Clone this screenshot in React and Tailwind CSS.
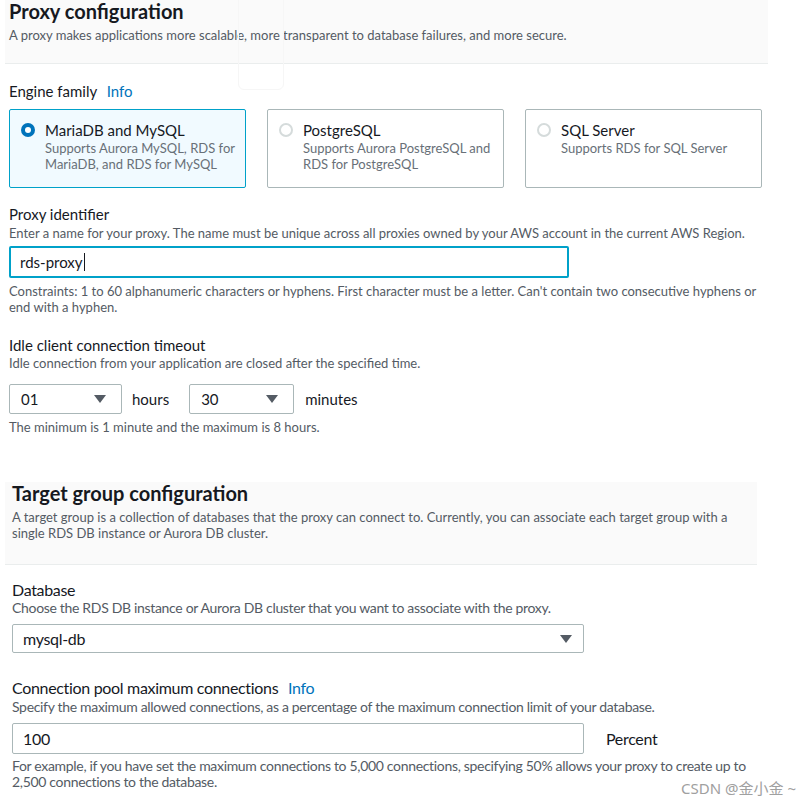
import { useState } from "react";

function Radio({ checked }) {
  return checked ? (
    <span className="mt-[3px] flex h-[14px] w-[14px] shrink-0 items-center justify-center rounded-full bg-[#0073bb]">
      <span className="h-[6px] w-[6px] rounded-full bg-white" />
    </span>
  ) : (
    <span className="mt-[3px] h-[14px] w-[14px] shrink-0 rounded-full border-2 border-[#d5dbdb] bg-white" />
  );
}

function EngineCard({ title, desc, checked }) {
  return (
    <div
      className={`flex h-[79px] w-[237px] gap-[10px] rounded-[2px] border pl-[11px] pt-[10px] pr-2 ${
        checked ? "border-[#00a1c9] bg-[#f1faff]" : "border-[#aab7b8] bg-white"
      }`}
    >
      <Radio checked={checked} />
      <div>
        <p className="text-[15px] leading-[20px] text-[#16191f]">{title}</p>
        <p className="text-[13px] leading-[16px] text-[#687078]">{desc}</p>
      </div>
    </div>
  );
}

function Caret() {
  return (
    <svg width="12" height="8" viewBox="0 0 12 8" className="shrink-0">
      <path d="M0 0 H12 L6 8 Z" fill="#545b64" />
    </svg>
  );
}

function TimeSelect({ value, width }) {
  return (
    <div
      className={`flex h-[30px] items-center justify-between rounded-[2px] border border-[#aab7b8] bg-white pl-[11px] pr-[15px] text-[15px] text-[#16191f] ${width}`}
    >
      <span>{value}</span>
      <Caret />
    </div>
  );
}

export default function App() {
  const [engine] = useState("mysql");

  const engines = [
    { id: "mysql", title: "MariaDB and MySQL", desc: "Supports Aurora MySQL, RDS for MariaDB, and RDS for MySQL" },
    { id: "pg", title: "PostgreSQL", desc: "Supports Aurora PostgreSQL and RDS for PostgreSQL" },
    { id: "mssql", title: "SQL Server", desc: "Supports RDS for SQL Server" },
  ];

  return (
    <div className="relative min-h-[806px] w-[808px] overflow-hidden bg-white font-['Lato',sans-serif] text-[#16191f]">
      {/* faint floating toolbar ghost */}
      <div className="pointer-events-none absolute left-[238px] top-[-10px] h-[100px] w-[46px] rounded-md border border-[#f6f6f6]" />

      {/* PROXY CONFIGURATION HEADER */}
      <div className="ml-[5px] h-[64px] w-[763px] border-b border-[#eaeded] bg-[#fafafa] pl-[4px]">
        <h1 className="text-[20px] font-bold leading-[23px]">Proxy configuration</h1>
        <p className="mt-[4px] text-[13px] leading-[16px] text-[#545b64]">
          A proxy makes applications more scalable, more transparent to database failures, and more secure.
        </p>
      </div>

      <div className="w-[770px] pl-[9px]">
        {/* ENGINE FAMILY */}
        <p className="mt-[17px] text-[15px] leading-[20px]">
          Engine family <span className="ml-[6px] text-[#0073bb]">Info</span>
        </p>
        <div className="mt-[8px] flex gap-[21px]">
          {engines.map((e) => (
            <EngineCard key={e.id} title={e.title} desc={e.desc} checked={engine === e.id} />
          ))}
        </div>

        {/* PROXY IDENTIFIER */}
        <p className="mt-[16px] text-[15px] leading-[20px]">Proxy identifier</p>
        <p className="mt-[1px] text-[13px] leading-[16px] text-[#545b64]">
          Enter a name for your proxy. The name must be unique across all proxies owned by your AWS account in the current AWS Region.
        </p>
        <div className="mt-[5px] flex h-[32px] w-[560px] items-center rounded-[2px] border-2 border-[#00a1c9] pl-[9px] text-[15px]">
          <span>rds-proxy</span>
          <span className="ml-[1px] h-[18px] w-px bg-[#16191f]" />
        </div>
        <p className="mt-[5px] w-[755px] text-[13px] leading-[16px] text-[#545b64]">
          Constraints: 1 to 60 alphanumeric characters or hyphens. First character must be a letter. Can't contain two consecutive hyphens or end with a hyphen.
        </p>

        {/* IDLE TIMEOUT */}
        <p className="mt-[20px] text-[15px] leading-[20px]">Idle client connection timeout</p>
        <p className="text-[13px] leading-[16px] text-[#545b64]">
          Idle connection from your application are closed after the specified time.
        </p>
        <div className="mt-[13px] flex items-center">
          <TimeSelect value="01" width="w-[113px]" />
          <span className="ml-[10px] text-[15px]">hours</span>
          <div className="ml-[20px]">
            <TimeSelect value="30" width="w-[105px]" />
          </div>
          <span className="ml-[11px] text-[15px]">minutes</span>
        </div>
        <p className="mt-[5px] text-[13px] leading-[16px] text-[#545b64]">
          The minimum is 1 minute and the maximum is 8 hours.
        </p>
      </div>

      {/* TARGET GROUP HEADER */}
      <div className="ml-[5px] mt-[47px] h-[83px] w-[752px] border-b border-[#eaeded] bg-[#fafafa] pl-[7px]">
        <h2 className="text-[20px] font-bold leading-[23px]">Target group configuration</h2>
        <p className="mt-[4px] w-[740px] text-[13px] leading-[16px] text-[#545b64]">
          A target group is a collection of databases that the proxy can connect to. Currently, you can associate each target group with a single RDS DB instance or Aurora DB cluster.
        </p>
      </div>

      <div className="pl-[12px] tracking-[-0.02em]">
        {/* DATABASE */}
        <p className="mt-[15px] text-[16px] leading-[20px]">Database</p>
        <p className="text-[14px] leading-[16px] text-[#545b64]">
          Choose the RDS DB instance or Aurora DB cluster that you want to associate with the proxy.
        </p>
        <div className="mt-[8px] flex h-[29px] w-[572px] items-center justify-between rounded-[2px] border border-[#aab7b8] pl-[10px] pr-[11px] text-[16px]">
          <span>mysql-db</span>
          <Caret />
        </div>

        {/* CONNECTION POOL */}
        <p className="mt-[25px] text-[16px] leading-[20px]">
          Connection pool maximum connections <span className="ml-[6px] text-[#0073bb]">Info</span>
        </p>
        <p className="mt-[1px] text-[14px] leading-[16px] text-[#545b64]">
          Specify the maximum allowed connections, as a percentage of the maximum connection limit of your database.
        </p>
        <div className="mt-[8px] flex items-center">
          <div className="flex h-[31px] w-[572px] items-center rounded-[2px] border border-[#aab7b8] pl-[10px] text-[16px]">
            100
          </div>
          <span className="ml-[22px] text-[16px]">Percent</span>
        </div>
        <p className="mt-[4px] w-[745px] text-[14px] leading-[16px] text-[#545b64]">
          For example, if you have set the maximum connections to 5,000 connections, specifying 50% allows your proxy to create up to 2,500 connections to the database.
        </p>
      </div>

      {/* watermark */}
      <span className="absolute bottom-[10px] right-[12px] font-['Noto_Sans','Noto_Sans_CJK_SC',sans-serif] text-[15px] leading-[16px] text-[#a0a0a0]">
        CSDN @金小金 ~
      </span>
    </div>
  );
}
